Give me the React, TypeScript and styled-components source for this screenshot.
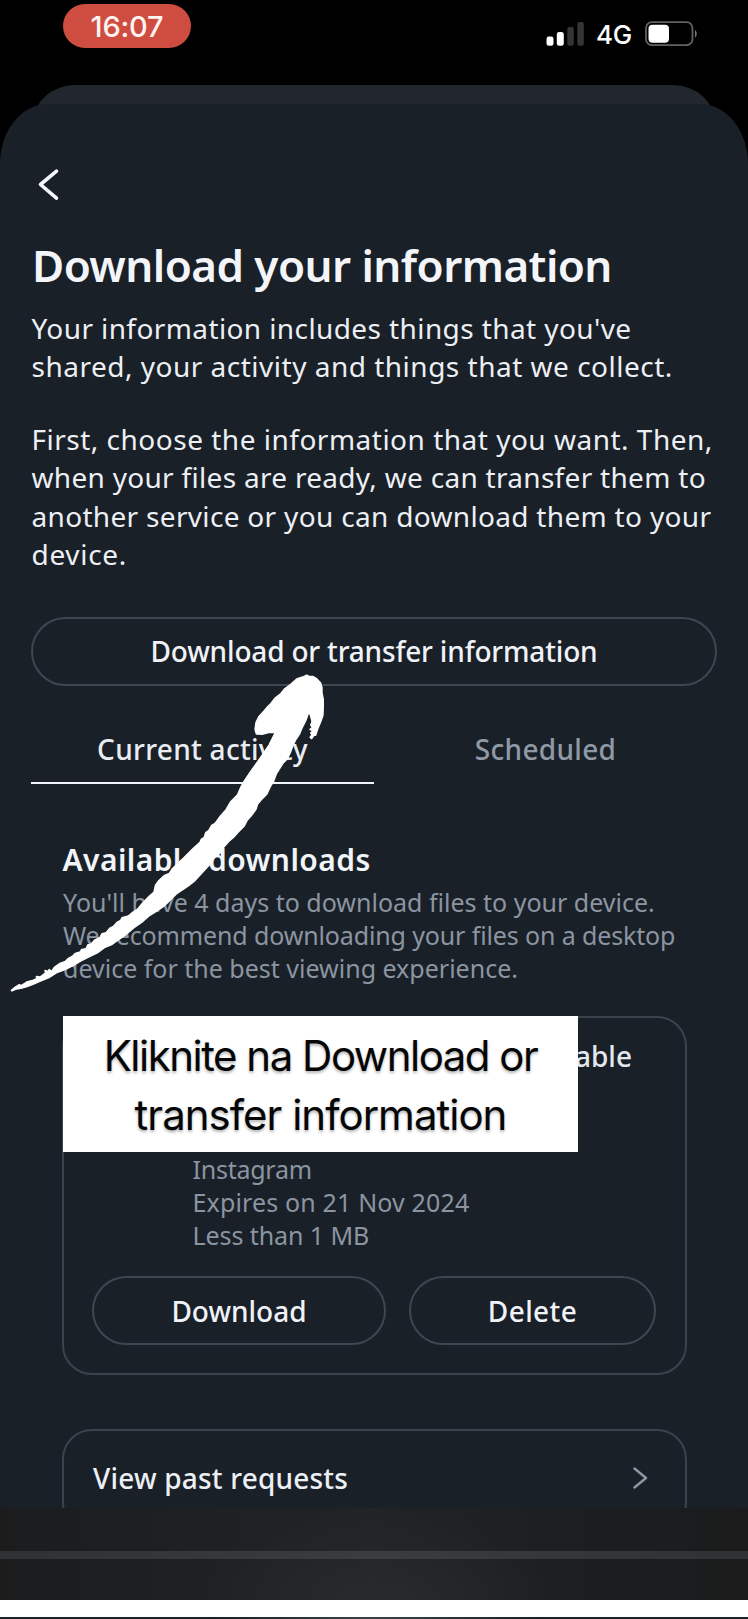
import React from 'react';
import styled, { createGlobalStyle } from 'styled-components';

const GlobalStyle = createGlobalStyle`
  * { box-sizing: border-box; }
  body {
    margin: 0;
    background: #000;
    font-family: "Noto Sans", sans-serif;
  }
  h1, h2, p { margin: 0; }
  button { font-family: inherit; background: none; padding: 0; cursor: pointer; }
`;

const Screen = styled.div`
  position: relative;
  width: 748px;
  height: 1619px;
  overflow: hidden;
  display: flex;
  flex-direction: column;
  background: #000;
`;

const StatusBar = styled.header`
  height: 85px;
  flex: none;
  display: flex;
  justify-content: space-between;
  align-items: flex-start;
  padding: 4px 50px 0 63px;
  font-family: Inter, sans-serif;
  color: #fff;
`;

const TimePill = styled.div`
  width: 128px;
  height: 44px;
  border-radius: 22px;
  background: #cf4c40;
  display: flex;
  align-items: center;
  justify-content: center;
  font-size: 29px;
  font-weight: 500;
  letter-spacing: -0.2px;
  color: #fff4f0;
`;

const StatusIcons = styled.div`
  display: flex;
  align-items: center;
  margin-top: 12px;
  height: 34px;
`;

const Network = styled.span`
  margin: 3px 12px 0 12px;
  width: 37px;
  font-size: 26px;
  line-height: 34px;
  font-weight: 450;
  letter-spacing: -0.2px;
`;

const BackSheet = styled.div`
  height: 50px;
  flex: none;
  margin: 0 33px -31px;
  border-radius: 42px 42px 0 0 / 38px 38px 0 0;
  background: #22272e;
`;

const Sheet = styled.main`
  position: relative;
  height: 1404px;
  flex: none;
  overflow: hidden;
  border-radius: 48px 48px 0 0 / 60px 60px 0 0;
  background: #1a2028;
  display: flex;
  flex-direction: column;
  padding: 0 31px;
`;

const BackButton = styled.button`
  border: 0;
  width: 40px;
  height: 40px;
  margin: 60px 0 0 0;
  display: flex;
`;

const Title = styled.h1`
  margin: 33.5px 0 0 1px;
  font-size: 44px;
  line-height: 54px;
  font-weight: 600;
  letter-spacing: -0.56px;
  white-space: nowrap;
  color: #f3f5f9;
`;

const Paragraph = styled.p<{ $top: number }>`
  margin: ${(p) => p.$top}px 0 0 0.5px;
  font-size: 28px;
  line-height: 38.4px;
  color: #eceff3;
`;

const Line = styled.span<{ $track?: number }>`
  display: block;
  white-space: nowrap;
  letter-spacing: ${(p) => p.$track ?? 0}px;
`;

const PillButton = styled.button<{ $grow?: string; $track?: number }>`
  flex: ${(p) => p.$grow ?? 'none'};
  height: 69px;
  border: 2px solid #3d4751;
  border-radius: 35px;
  font-size: 28px;
  font-weight: 500;
  line-height: 38px;
  letter-spacing: ${(p) => p.$track ?? 0}px;
  color: #eff2f7;
`;

const TransferAction = styled.div`
  display: grid;
  margin-top: 43.5px;
`;

const Tabs = styled.nav`
  display: grid;
  grid-template-columns: 1fr 1fr;
  margin-top: 29px;
`;

const Tab = styled.button<{ $active?: boolean }>`
  height: 69px;
  padding-top: 2px;
  border: 0;
  border-bottom: 2px solid ${(p) => (p.$active ? '#f1f4f8' : 'transparent')};
  font-size: 28px;
  font-weight: 500;
  letter-spacing: 0.3px;
  color: ${(p) => (p.$active ? '#e9edf2' : '#8f9aa6')};
`;

const Section = styled.section`
  display: flex;
  flex-direction: column;
  padding: 0 30px 0 31px;
  margin-top: 56px;
`;

const SectionTitle = styled.h2`
  margin-left: 0.5px;
  font-size: 30px;
  line-height: 40px;
  font-weight: 600;
  letter-spacing: 0.42px;
  color: #f1f4f8;
`;

const Muted = styled.p`
  font-size: 25px;
  line-height: 33px;
  color: #8b95a1;
`;

const Hint = styled(Muted)`
  margin: 6.5px 0 0 1px;
`;

const Card = styled.article`
  position: relative;
  height: 359px;
  margin-top: 31px;
  border: 2px solid #3a444e;
  border-radius: 30px;
  padding: 18.5px 29px 0;
  display: flex;
  flex-direction: column;
`;

const CardStatus = styled.p`
  align-self: flex-end;
  margin-right: 24px;
  height: 38px;
  font-size: 28px;
  line-height: 38px;
  font-weight: 500;
  color: #e4e8ee;
`;

const Meta = styled(Muted)`
  margin: 78.5px 0 0 99.5px;
`;

const Actions = styled.div`
  display: flex;
  gap: 23px;
  margin: 24px 0 0 -1px;
`;

const Callout = styled.div`
  position: absolute;
  left: -1px;
  top: -2px;
  width: 515px;
  height: 136px;
  padding-top: 10px;
  background: #fff;
  color: #060606;
  font-family: Inter, sans-serif;
  font-size: 42px;
  line-height: 59px;
  text-align: center;
  text-shadow: 0 2px 3px rgba(0, 0, 0, 0.3);
`;

const LinkCard = styled.a`
  flex: none;
  height: 103px;
  margin-top: 54px;
  border: 2px solid #3a444e;
  border-radius: 30px;
  padding: 0 37px 5px 29px;
  display: flex;
  align-items: center;
  justify-content: space-between;
  font-size: 28px;
  font-weight: 500;
  letter-spacing: 0.2px;
  color: #eceff4;
`;

const PlayerBar = styled.footer`
  flex: none;
  height: 92px;
  padding-top: 43px;
  background:
    radial-gradient(ellipse 180px 90px at 50% 100%, #282a2c, rgba(40, 42, 44, 0) 100%),
    linear-gradient(90deg, #1c1c1d, #1b1f22 12%, #202427 50%, #1b1e21 82%, #1b1b1b);
`;

const Track = styled.div`
  height: 8px;
  background: linear-gradient(90deg, #2f3133, #3a3c3f 50%, #2f3133);
`;

const Strip = styled.div`
  flex: none;
  height: 17px;
  background: #fff;
`;

const NextFrame = styled.div`
  flex: none;
  height: 2px;
  background: linear-gradient(90deg, #1a2028 28%, #3a424a 50%, #1a2028 72%);
`;

const BrushArrow = styled.svg`
  position: absolute;
  left: 0;
  top: 600px;
`;

export default function App() {
  return (
    <Screen>
      <GlobalStyle />
      <StatusBar>
        <TimePill>16:07</TimePill>
        <StatusIcons>
          <svg width="38" height="25" viewBox="0 0 38 25">
            <rect x="0.5" y="15.5" width="7" height="9.3" rx="2.4" fill="#fff" />
            <rect x="10.8" y="11" width="7" height="13.8" rx="2.4" fill="#fff" />
            <rect x="21.3" y="6" width="6.5" height="18.8" rx="2" fill="#353437" />
            <rect x="31.3" y="1" width="6.5" height="23.8" rx="2" fill="#353437" />
          </svg>
          <Network>4G</Network>
          <svg width="53" height="25" viewBox="0 0 53 25">
            <rect x="1" y="1.2" width="46.5" height="23" rx="6" fill="none" stroke="#636166" strokeWidth="1.8" />
            <rect x="3.5" y="3.7" width="20.5" height="18" rx="4" fill="#fff" />
            <path d="M50 8.7Q53.5 12.7 50 16.7Z" fill="#7a787c" />
          </svg>
        </StatusIcons>
      </StatusBar>
      <BackSheet />
      <Sheet>
        <BackButton aria-label="Back">
          <svg width="40" height="40" viewBox="0 0 40 40" fill="none" stroke="#f3f7fa" strokeWidth="3.6" strokeLinecap="round" strokeLinejoin="round">
            <path d="M25.5 7.2 9.5 20.5 25.5 34.2" />
          </svg>
        </BackButton>
        <Title>Download your information</Title>
        <Paragraph $top={17}>
          <Line $track={0.4}>Your information includes things that you've</Line>
          <Line $track={0.5}>shared, your activity and things that we collect.</Line>
        </Paragraph>
        <Paragraph $top={34.5}>
          <Line $track={0.5}>First, choose the information that you want. Then,</Line>
          <Line $track={0.3}>when your files are ready, we can transfer them to</Line>
          <Line $track={0.32}>another service or you can download them to your</Line>
          <Line $track={0.7}>device.</Line>
        </Paragraph>
        <TransferAction>
          <PillButton $track={-0.18}>Download or transfer information</PillButton>
        </TransferAction>
        <Tabs>
          <Tab $active>Current activity</Tab>
          <Tab>Scheduled</Tab>
        </Tabs>
        <Section>
          <SectionTitle>Available downloads</SectionTitle>
          <Hint>
            <Line>You'll have 4 days to download files to your device.</Line>
            <Line $track={-0.13}>We recommend downloading your files on a desktop</Line>
            <Line>device for the best viewing experience.</Line>
          </Hint>
          <Card>
            <CardStatus>able</CardStatus>
            <Meta>
              <Line $track={-0.25}>Instagram</Line>
              <Line $track={0.15}>Expires on 21 Nov 2024</Line>
              <Line $track={-0.08}>Less than 1 MB</Line>
            </Meta>
            <Actions>
              <PillButton $grow="0 0 294px">Download</PillButton>
              <PillButton $grow="1" $track={0.4}>Delete</PillButton>
            </Actions>
            <Callout>
              <Line $track={-1.5}>Kliknite na Download or</Line>
              <Line $track={-1}>transfer information</Line>
            </Callout>
          </Card>
          <LinkCard>
            View past requests
            <svg width="16" height="22" viewBox="0 0 16 22" fill="none" stroke="#8c97a2" strokeWidth="2.4" strokeLinecap="round" strokeLinejoin="round">
              <path d="M2.5 1.5 14 11 2.5 20.5" />
            </svg>
          </LinkCard>
        </Section>
      </Sheet>
      <PlayerBar>
        <Track />
      </PlayerBar>
      <Strip />
      <NextFrame />
      <BrushArrow width="374" height="400" viewBox="0 0 1122 1200" fill="#fff" stroke="#fff" strokeWidth="4" strokeLinejoin="round">
        <path d="M34 1171 46 1161 58 1154 64 1157 80 1146 98 1141 110 1136 109 1129 120 1131 136 1119 135 1111 143 1114 148 1108 154 1115 164 1101 180 1090 196 1084 204 1076 218 1068 226 1060 240 1056 245 1048 258 1046 264 1034 274 1032 284 1020 300 1012 306 1001 318 998 330 984 340 979 352 966 362 961 366 953 385 948 398 937 412 928 426 911 446 890 462 876 466 856 476 842 492 827 508 820 517 806 532 791 550 775 580 745 600 727 604 717 612 713 617 698 626 692 635 676 645 670 662 647 678 629 692 605 712 585 724 558 732 544 750 517 766 495 784 469 807 435 826 397 806 398 786 403 776 402 769 402 765 388 768 367 777 349 792 333 801 322 812 311 826 293 842 281 854 266 872 253 890 237 908 231 920 225 928 229 938 229 950 236 962 249 966 262 966 278 970 298 970 320 969 346 962 366 954 385 947 406 942 406 935 416 930 412 936 404 932 399 938 393 930 388 937 383 932 375 936 365 932 349 927 335 917 363 907 382 899 402 887 420 879 436 871 458 861 478 849 490 839 506 829 522 821 544 811 560 801 582 787 596 773 612 768 628 755 646 741 662 733 678 715 696 701 712 687 724 671 742 659 760 643 774 629 794 605 820 583 844 565 858 547 870 529 882 511 900 495 916 469 934 447 948 429 964 401 984 379 1003 359 1017 337 1033 313 1043 295 1057 267 1071 243 1083 219 1097 195 1109 169 1119 147 1133 123 1143 99 1153 83 1159 66 1164 50 1167 36 1173Z" />
      </BrushArrow>
    </Screen>
  );
}
